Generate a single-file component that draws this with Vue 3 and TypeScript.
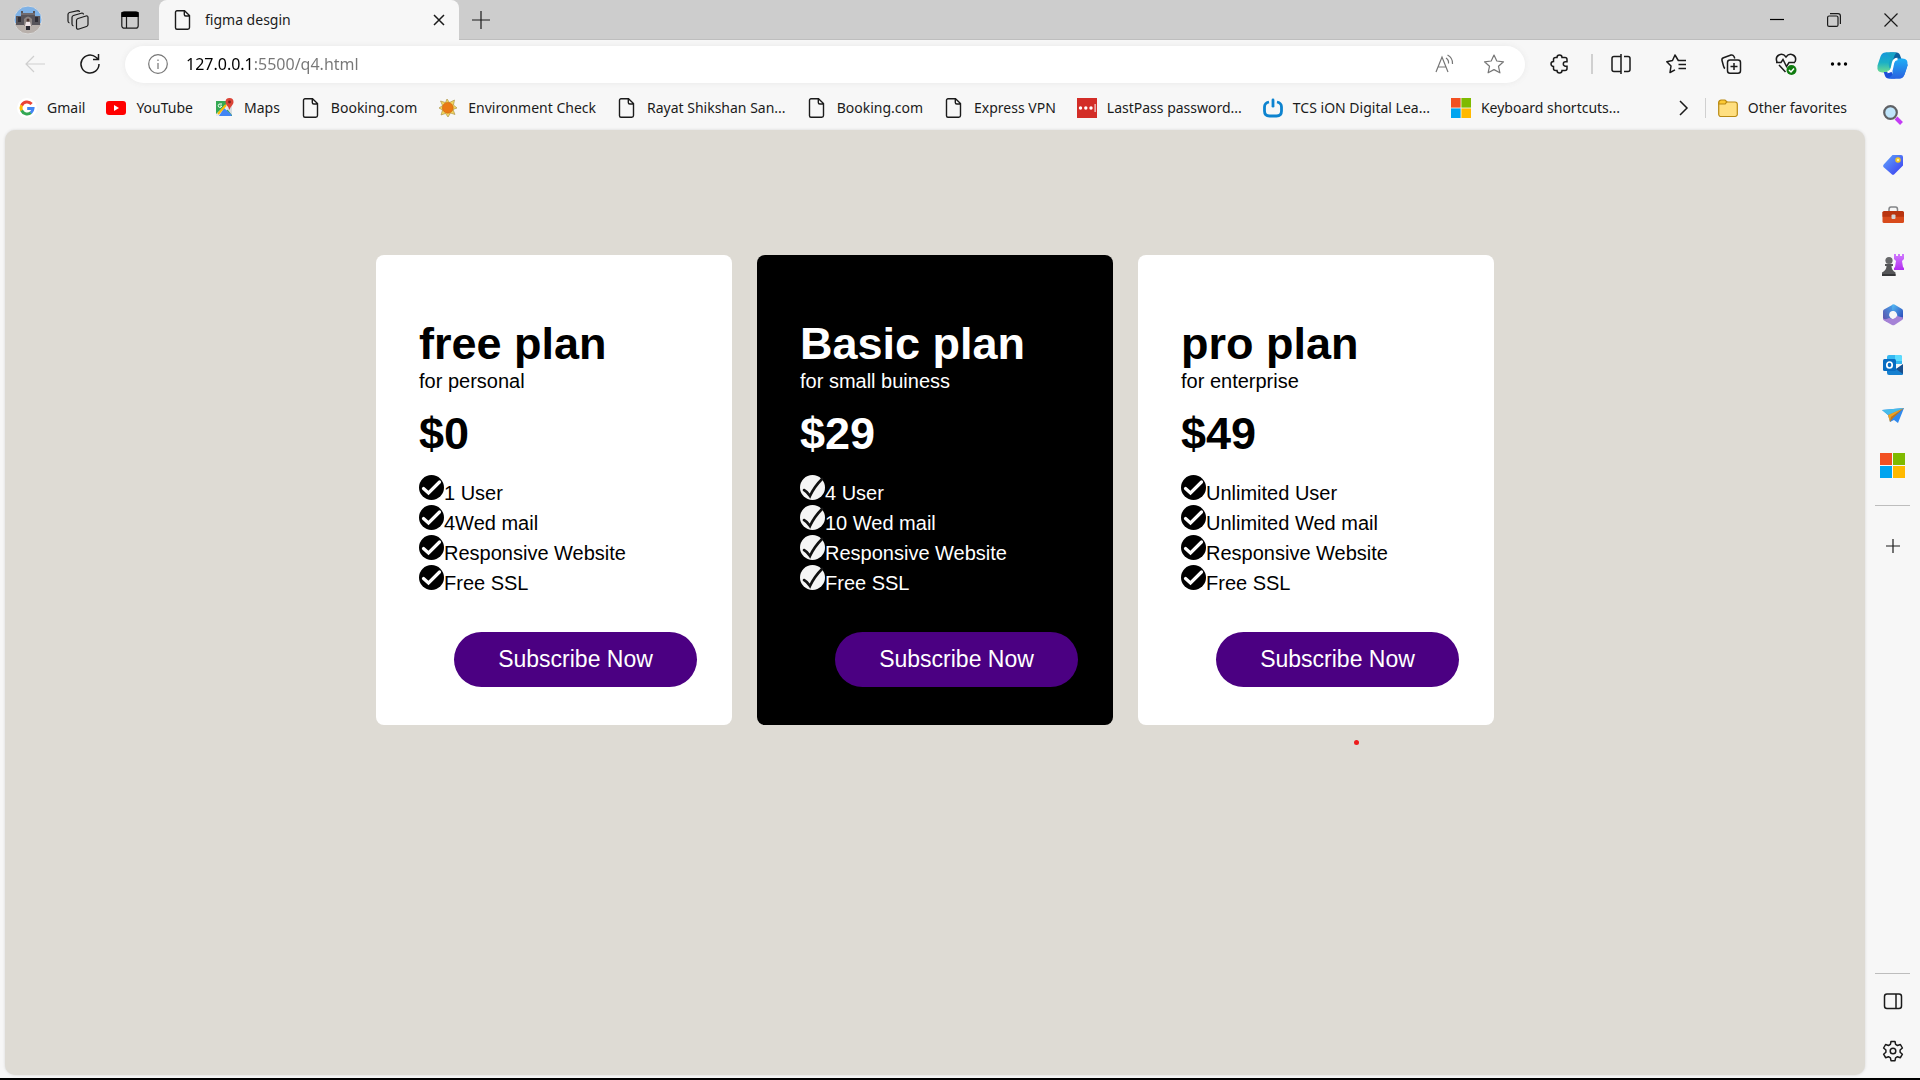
<script setup lang="ts">
import { ref } from 'vue'

interface Bookmark {
  label: string
  icon: string
}

interface Plan {
  name: string
  audience: string
  price: string
  features: string[]
  dark?: boolean
}

const address = ref('127.0.0.1:5500/q4.html')

// Inner markup of each 20x20 icon
const icons: Record<string, string> = {
  page: '<path d="M4 .8h7.500l5 4.700V17.500a1.700 1.700 0 0 1-1.700 1.700H4A1.500 1.500 0 0 1 2.500 17.700V2.300A1.500 1.500 0 0 1 4 .8z M11.300 1V4.500a1.500 1.500 0 0 0 1.500 1.500H16" fill="none" stroke="#1b1b1b" stroke-width="1.400"/>',
  google: '<circle cx="10" cy="10" r="10" fill="#fff"/><g fill="none" stroke-width="3"><path d="M14.600 6A6 6 0 0 0 4.600 7.600" stroke="#ea4335"/><path d="M4.600 7.400a6 6 0 0 0 0 5.200" stroke="#fbbc05"/><path d="M4.600 12.400a6 6 0 0 0 9.400 2.200" stroke="#34a853"/><path d="M13.800 14.800a6 6 0 0 0 2.200-4.300h-5.800" stroke="#4285f4"/></g>',
  youtube: '<rect y="3" width="20" height="14" rx="3" fill="#f00"/><path d="M8 7v6l5-3z" fill="#fff"/>',
  maps: '<path d="M2 3h16v15H2z" fill="#34a853"/><path d="M2 16 16 3h2v5L6 18H2z" fill="#e8eaed"/><path d="M10 10l8 7-1 1H5z" fill="#4285f4"/><path d="M13 11l5-4v10z" fill="#dadce0"/><path d="M12 7l-8 9" stroke="#fbbc05" stroke-width="2"/><path d="M8 6H6a1.700 1.700 0 1 0 1.600 2H6.300" fill="none" stroke="#fff"/><path d="M15.500 0a4 4 0 0 1 4 4c0 3-3 4-4 8-1-4-4-5-4-8a4 4 0 0 1 4-4z" fill="#db4437"/><circle cx="15.500" cy="4" r="1.400" fill="#7b231e"/>',
  sun: '<path d="M9 1l2.500 3.500L16.500 2l-1 5L19 10l-4 1.500 2 5-4.500-1.500L10 19l-2.500-3.500-4.500 1.500 1.500-5L1 10l3.500-2.500L2.500 3l5 1.500z" fill="#f0d560" stroke="#a58a3c" stroke-width=".6"/><circle cx="9.800" cy="9.800" r="5.400" fill="#ea7a15" stroke="#c9650f" stroke-width=".6"/>',
  lastpass: '<path d="M0 0h20v20H0z" fill="#d32d27"/><g fill="#fff"><circle cx="3.500" cy="10" r="1.700"/><circle cx="8.800" cy="10" r="1.700"/><circle cx="14" cy="10" r="1.700"/><path d="M17.600 6h1v8h-1z"/></g>',
  tcs: '<path d="M6 4Q1.500 5 1.500 9v4q0 5 5 5h7q5 0 5-5V9q0-4-4.500-5" fill="none" stroke="#0d83cf" stroke-width="2.800"/><path d="M10 2v6.200" stroke="#0d83cf" stroke-width="2.800" stroke-linecap="round"/>',
  microsoft: '<path d="M0 0h9.600v9.600H0z" fill="#f25022"/><path d="M10.400 0H20v9.600h-9.600z" fill="#7fba00"/><path d="M0 10.400h9.600V20H0z" fill="#00a4ef"/><path d="M10.400 10.400H20V20h-9.600z" fill="#ffb900"/>',
  folder: '<path d="M.7 5.500a3 3 0 0 1 3-3H7l2 1.500h8a2.300 2.300 0 0 1 2.300 2.300v9.500A2.300 2.300 0 0 1 17 18.500H3a2.300 2.300 0 0 1-2.300-2.300z" fill="#ffdf80" stroke="#b98a13" stroke-width="1.200"/><path d="M.7 5.200A3 3 0 0 1 3 2h4l1.800 1.800-1.600 2.200H.7z" fill="#fcc934" stroke="#b98a13" stroke-width="1.200"/>',
  search: '<path d="M13 13l5.500 5.500" stroke="#c33cf5" stroke-width="4"/><circle cx="7.500" cy="7.500" r="6.300" fill="#bfe5fb" stroke="#5f6165" stroke-width="2.200"/>',
  tag: '<defs><linearGradient id="tag" x1="0" y1="0" x2="1" y2="1"><stop stop-color="#61a8fb"/><stop offset="1" stop-color="#3a39f0"/></linearGradient></defs><path d="M9.500 0H18a2 2 0 0 1 2 2v8.500L11.500 19a2 2 0 0 1-3 0L.7 12.300a2 2 0 0 1 0-2.800z" fill="url(#tag)"/><circle cx="15" cy="5" r="2" fill="#fff2a0" stroke="#f4c720" stroke-width="1.500"/>',
  toolbox: '<path d="M6 6.500V4.500q0-2.400 2-2.400h4.500q2 0 2 2.400v2" fill="none" stroke="#838588" stroke-width="1.500"/><path d="M-.5 7H21v9.500q0 1.500-1.500 1.500H1q-1.500 0-1.500-1.500z" fill="#d84a1b"/><path d="M-.5 7.500Q-.5 6 1 6h18.500Q21 6 21 7.500v4.300H-.5z" fill="#b9340f"/><rect x="8.500" y="9.500" width="4" height="4.500" rx="1" fill="#d3d4d6"/>',
  games: '<defs><linearGradient id="rook" x1="0" y1="0" x2="0" y2="1"><stop stop-color="#d07bff"/><stop offset="1" stop-color="#b22df0"/></linearGradient></defs><path d="M11-1h2v2h2v-2h2v2h2v-2h2v5l-2 2 1 6 1 1v2H11v-2l1-1 1-6-2-2z" fill="url(#rook)"/><circle cx="6" cy="5.500" r="3.600" fill="#67686a"/><path d="M2 9h8v2H8.500q0 4 4 6.500V21H-1v-3.500Q3.500 15 3.500 11H2z" fill="#555658"/><path d="M-1 19h13.500v2H-1z" fill="#363739"/>',
  m365: '<defs><linearGradient id="ma" x1="0" y1="1" x2="1" y2="0"><stop stop-color="#604ba5"/><stop offset="1" stop-color="#3fa8f1"/></linearGradient><linearGradient id="mb" x1="0" y1="0" x2="1" y2="1"><stop stop-color="#57c0f7"/><stop offset="1" stop-color="#2840b4"/></linearGradient></defs><path d="M10-.5 1 4.500Q0 5 0 6.500v7L4 17l5-3-3-4 5-5z" fill="url(#ma)"/><path d="M9.500-.5q1-.5 2 0l7.500 4.500q1 .5 1 2v8l-5 1-1-6-5-4z" fill="url(#mb)"/><path d="M20 12.500q0 2-1 2.500l-7.500 5q-1 .5-2.500 0L1 15.500q-1-.5-1-2 3 1.500 6-.5l4 1 4-3z" fill="#a582d6"/><circle cx="10" cy="9.800" r="3.700" fill="#f7f7f7"/>',
  outlook: '<path d="M6 0h11q2 0 2 2v7H4V2q0-2 2-2z" fill="#35b8f1"/><path d="M12 0h5q2 0 2 2v4h-7z" fill="#5bdcff"/><path d="M4 7h8v8H4z" fill="#0a6bc2"/><path d="M20 10v9q0 1-1 1H6q-2 0-2-2v-3l9-1z" fill="#1680d0"/><path d="M13 14l7-5v10z" fill="#1a4f8d"/><rect y="4" width="13" height="12" rx="1.500" fill="#086cc1"/><ellipse cx="6.500" cy="10" rx="2.700" ry="3" fill="none" stroke="#fff" stroke-width="1.700"/>',
  drop: '<path d="M-1 5 21 3 15 18l-4-3-4 2-2-7z" fill="#2f89ee"/><path d="M-1 5 21 3 5 10z" fill="#48bce9"/><path d="M21 3 8 12l-1 5-2-7z" fill="#f2a21c"/><path d="M21 3 8 12l-1 5 3-4z" fill="#c87410"/>',
  copilot: '<defs><linearGradient id="ca" x1="0" y1="0" x2="0" y2="1"><stop stop-color="#1596dc"/><stop offset=".5" stop-color="#1bb0c6"/><stop offset="1" stop-color="#6fdc8f"/></linearGradient><linearGradient id="cb" x1="0" y1="0" x2="0" y2="1"><stop stop-color="#2b62e0"/><stop offset="1" stop-color="#1fb0f6"/></linearGradient></defs><g transform="translate(-2 -.4) scale(.8)"><path d="M12 0h7q3 0 4 4l1.500 4H16z" fill="#0b5f9f"/><path d="M8 0h9q-2 2-2 5v7l-2 5q-1 3-4 3H5Q-1 20 0 13L3 4Q4.500 0 8 0z" fill="url(#ca)"/><path d="M8 0h11q-2 2-3 6l-1 4q-1 4-3 6Q10 9 14 6z" fill="#17a2c6"/><path d="M18 26h-7q-3 0-4-4l-.8-2.500H14z" fill="#1d4fd8"/><path d="M8 0h11Q-1 20 0 13 1.500 8 3 4 4.500 0 8 0z" transform="rotate(180 15 13)" fill="#1d6ee8"/><path d="M8 0h9q-2 2-2 5v7l-2 5q-1 3-4 3H5Q-1 20 0 13L3 4Q4.500 0 8 0z" transform="rotate(180 15 13)" fill="url(#cb)"/><path d="M10 19.500q3.500 0 4.500-4l1-5q1-4 4.500-4" fill="none" stroke="#fff" stroke-width="2.400"/></g>',
}

const bookmarks: Bookmark[] = [
  { label: 'Gmail', icon: 'google' },
  { label: 'YouTube', icon: 'youtube' },
  { label: 'Maps', icon: 'maps' },
  { label: 'Booking.com', icon: 'page' },
  { label: 'Environment Check', icon: 'sun' },
  { label: 'Rayat Shikshan San...', icon: 'page' },
  { label: 'Booking.com', icon: 'page' },
  { label: 'Express VPN', icon: 'page' },
  { label: 'LastPass password...', icon: 'lastpass' },
  { label: 'TCS iON Digital Lea...', icon: 'tcs' },
  { label: 'Keyboard shortcuts...', icon: 'microsoft' },
]

const sideApps = [
  { name: 'Copilot', icon: 'copilot' },
  { name: 'Search', icon: 'search' },
  { name: 'Shopping', icon: 'tag' },
  { name: 'Tools', icon: 'toolbox' },
  { name: 'Games', icon: 'games' },
  { name: 'Microsoft 365', icon: 'm365' },
  { name: 'Outlook', icon: 'outlook' },
  { name: 'Drop', icon: 'drop' },
  { name: 'Microsoft', icon: 'microsoft' },
]

const plans: Plan[] = [
  {
    name: 'free plan',
    audience: 'for personal',
    price: '$0',
    features: ['1 User', '4Wed mail', 'Responsive Website', 'Free SSL'],
  },
  {
    name: 'Basic plan',
    audience: 'for small buiness',
    price: '$29',
    features: ['4 User', '10 Wed mail', 'Responsive Website', 'Free SSL'],
    dark: true,
  },
  {
    name: 'pro plan',
    audience: 'for enterprise',
    price: '$49',
    features: ['Unlimited User', 'Unlimited Wed mail', 'Responsive Website', 'Free SSL'],
  },
]
</script>

<template>
  <div class="browser">
    <header class="titlebar">
      <div class="profile">
        <button class="plain" aria-label="Profile">
          <svg width="30" height="30" viewBox="0 0 30 30">
            <defs><clipPath id="round"><circle cx="15" cy="15" r="14" /></clipPath></defs>
            <g clip-path="url(#round)">
              <path d="M0 0h30v18H0z" fill="#7fb2e6" />
              <path d="M0 19h30v11H0z" fill="#b8b0ab" />
              <path d="M3 11h5V6h2v2h10V6h2v5h5v9H3z" fill="#57545a" />
              <path d="M11 21v-7q4-5 8 0v7z" fill="#8d8583" />
              <path d="M5 12h3v5H5zm17 0h3v5h-3z" fill="#302e35" />
              <path d="M8 9h14" stroke="#8b8282" />
              <path d="M13 17h4l1 4h-6z" fill="#efe4e6" />
              <path d="M13 21h4v4h-4z" fill="#2b2a33" />
              <circle cx="15" cy="15" r="1.500" fill="#4c3430" />
            </g>
            <circle cx="15" cy="15" r="14" fill="none" stroke="#d9d9d9" />
          </svg>
        </button>
        <button class="plain" aria-label="Workspaces">
          <svg class="line" width="22" height="20" viewBox="0 0 22 20">
            <path d="M11 8.500l8-2.500q2-.5 2 1.500v7q0 1.500-1.500 2L12 19q-2.500.6-2.500-1.500v-7Q9.500 9 11 8.500z" />
            <path d="M6.500 16Q5 15.500 5 14V7.500Q5 6 6.500 5.500L15 3q1.500 0 1.500 1.500" />
            <path d="M2.500 13Q1 12.500 1 11V4.500Q1 3 2.500 2.500L11 .7q1.500 0 1.500 1.300" />
          </svg>
        </button>
        <button class="plain" aria-label="Tab actions">
          <svg class="line" width="18" height="18" viewBox="0 0 18 18">
            <rect x=".8" y=".8" width="16.400" height="16.400" rx="2.500" />
            <path d="M1 1.500h16v4H1z" fill="#000" stroke="#000" />
            <path d="M5.500 6v11" />
          </svg>
        </button>
      </div>
      <div class="tab">
        <svg width="20" height="20" viewBox="0 0 20 20" v-html="icons.page"></svg>
        <span class="tab-name">figma desgin</span>
        <button class="plain" aria-label="Close tab">
          <svg class="line bold" width="10" height="10" viewBox="0 0 10 10"><path d="M0 0l10 10M10 0L0 10" /></svg>
        </button>
      </div>
      <button class="plain new-tab" aria-label="New tab">
        <svg class="line" width="18" height="18" viewBox="0 0 18 18"><path d="M9 0v18M0 9h18" /></svg>
      </button>
      <div class="window-controls">
        <button class="plain" aria-label="Minimize">
          <svg class="line" width="14" height="14" viewBox="0 0 14 14"><path d="M0 6.500h14" stroke="#000" /></svg>
        </button>
        <button class="plain" aria-label="Restore">
          <svg class="line" width="14" height="14" viewBox="0 0 14 14">
            <rect x=".6" y="3" width="10.400" height="10.400" rx="1.500" />
            <path d="M3 .7h8q2.400 0 2.400 2.300v8" />
          </svg>
        </button>
        <button class="plain" aria-label="Close">
          <svg class="line" width="14" height="14" viewBox="0 0 14 14"><path d="M.5.5l13 13M13.500.5l-13 13" /></svg>
        </button>
      </div>
    </header>

    <div class="body">
      <div class="main">
        <div class="toolbar">
          <button class="plain nav" aria-label="Back" disabled>
            <svg class="line faded" width="20" height="18" viewBox="0 0 20 18"><path d="M9 1L1 9l8 8M1 9h19" /></svg>
          </button>
          <button class="plain nav" aria-label="Refresh">
            <svg class="line bold" width="20" height="20" viewBox="0 0 20 20">
              <path d="M19 10a9 9 0 1 1-3-6.700L18 5M18.500 0v5.500H13" />
            </svg>
          </button>
          <div class="address">
            <svg class="line muted" width="20" height="20" viewBox="0 0 20 20">
              <circle cx="10" cy="10" r="9.300" /><path d="M10 9v6M10 5.500v1.500" />
            </svg>
            <input v-model="address" type="text" aria-label="Address" spellcheck="false" />
            <button class="plain" aria-label="Read aloud">
              <svg class="line muted" width="20" height="20" viewBox="0 0 20 20">
                <path d="M1 18L7 3l6 15M3 13h8M11 4q3 2 2.500 5.500M12.500 1q5.500 3 5 9" />
              </svg>
            </button>
            <button class="plain" aria-label="Add to favorites">
              <svg class="line muted" width="22" height="20" viewBox="0 0 22 20">
                <path d="M11 1l2.800 6 6.700.8-5 4.500 1.400 6.500L11 15.600l-5.900 3.200 1.400-6.500-5-4.500L8.200 7z" stroke-linejoin="round" />
              </svg>
            </button>
          </div>
          <button class="plain tool" aria-label="Extensions">
            <svg class="line bold" width="20" height="20" viewBox="0 0 20 20">
              <path d="M7 3.500a2.500 2.500 0 0 1 5 0h3q2 0 2 2v2.300h-1.500a2.200 2.200 0 0 0 0 4.400H17v2.300q0 2-2 2h-3a2.500 2.500 0 0 1-5 0H5.500q-2 0-2-2v-2a2.500 2.500 0 0 1 0-5V5.500q0-2 2-2z" />
            </svg>
          </button>
          <span class="divider"></span>
          <button class="plain tool" aria-label="Split screen">
            <svg class="line bold" width="20" height="20" viewBox="0 0 20 20">
              <path d="M7 2.500H3q-2 0-2 2v11q0 2 2 2h4M13 2.500h4q2 0 2 2v11q0 2-2 2h-4M10 0v20M7 2.500h3M7 17.500h3" />
            </svg>
          </button>
          <button class="plain tool" aria-label="Favorites">
            <svg class="line bold" width="20" height="20" viewBox="0 0 20 20">
              <path d="M18 6.500h-5.700L9 1 6.500 6.500.8 7.800 5 12l-1 6.500 5-2.700M13 6.500h7M12.500 10.500H20M12.500 14.500H20" stroke-linejoin="round" />
            </svg>
          </button>
          <button class="plain tool" aria-label="Collections">
            <svg class="line bold" width="20" height="20" viewBox="0 0 20 20">
              <path d="M4 14.500Q3 14 2.500 12L1 6.500Q.5 4.500 2.500 3.800L10 1q2-.5 3 1.500l.8 2" />
              <rect x="6.500" y="6" width="13" height="13.300" rx="2.500" /><path d="M13 9v7M9.500 12.500h7" />
            </svg>
          </button>
          <button class="plain tool" aria-label="Browser essentials">
            <svg class="line bold" width="22" height="22" viewBox="0 0 22 22">
              <path d="M2 9Q0 4 4 2q4-2 7 2 3-4 7-2 4 2 2 7M1 9.500h5l2-3 3.500 7 2.500-4h6M4 12l6.500 7" />
              <circle cx="16.500" cy="17" r="5" fill="#107c10" stroke="none" />
              <path d="M14 17l2 2 3-3.500" stroke="#fff" />
            </svg>
          </button>
          <button class="plain tool" aria-label="Settings and more">
            <svg width="18" height="4" viewBox="0 0 18 4">
              <circle cx="2.500" cy="2" r="1.700" /><circle cx="9" cy="2" r="1.700" /><circle cx="15.500" cy="2" r="1.700" />
            </svg>
          </button>
        </div>

        <nav class="bookmarks">
          <a v-for="(mark, i) in bookmarks" :key="i" href="#" class="bookmark">
            <svg width="20" height="20" viewBox="0 0 20 20" v-html="icons[mark.icon]"></svg>
            <span>{{ mark.label }}</span>
          </a>
          <div class="overflow">
            <button class="plain" aria-label="More favorites">
              <svg class="line bold" width="9" height="16" viewBox="0 0 9 16"><path d="M1 1l7 7-7 7" /></svg>
            </button>
            <span class="divider"></span>
            <a href="#" class="bookmark">
              <svg width="20" height="20" viewBox="0 0 20 20" v-html="icons.folder"></svg>
              <span>Other favorites</span>
            </a>
          </div>
        </nav>

        <main class="page">
          <section class="plans">
            <article v-for="plan in plans" :key="plan.name" class="card" :class="{ dark: plan.dark }">
              <h1>{{ plan.name }}</h1>
              <p class="audience">{{ plan.audience }}</p>
              <p class="price">{{ plan.price }}</p>
              <ul>
                <li v-for="feature in plan.features" :key="feature">
                  <svg width="25" height="25" viewBox="0 0 25 25">
                    <template v-if="plan.dark">
                      <circle cx="12.500" cy="12.500" r="12.500" fill="#f5f5f5" />
                      <path d="M4 15q3 1.500 6 6Q14 12 22 4" fill="none" stroke="#111" stroke-width="2.600" stroke-linecap="round" />
                    </template>
                    <template v-else>
                      <circle cx="12.500" cy="12.500" r="12.500" fill="#000" />
                      <path d="M4.500 13.500l5 4.500L20.500 7" fill="none" stroke="#fff" stroke-width="3.200" stroke-linecap="round" />
                    </template>
                  </svg>
                  <span>{{ feature }}</span>
                </li>
              </ul>
              <button class="subscribe">Subscribe Now</button>
            </article>
            <span class="pointer-dot"></span>
          </section>
        </main>
      </div>

      <aside class="sidebar">
        <button v-for="app in sideApps" :key="app.name" class="plain" :class="app.icon" :aria-label="app.name">
          <svg viewBox="0 0 20 20" v-html="icons[app.icon]"></svg>
        </button>
        <hr />
        <button class="plain" aria-label="Customize">
          <svg class="line" viewBox="0 0 20 20"><path d="M10 3v14M3 10h14" /></svg>
        </button>
        <hr class="push" />
        <button class="plain" aria-label="Toggle sidebar">
          <svg class="line bold" viewBox="0 0 20 20"><rect x="1.500" y="3" width="17" height="14.500" rx="2.500" /><path d="M13 3v14.500" /></svg>
        </button>
        <button class="plain" aria-label="Settings">
          <svg class="line bold" viewBox="0 0 20 20">
            <path d="M8 .5h4l.6 2.900 1.900 1.100 2.900-1 2 3.500-2.300 2v2.200l2.300 2-2 3.500-2.900-1-1.900 1.100-.6 2.900H8l-.6-2.900-1.900-1.100-2.900 1-2-3.500 2.300-2V9L.6 7l2-3.500 2.900 1 1.900-1.100z" stroke-linejoin="round" />
            <circle cx="10" cy="10" r="2.800" />
          </svg>
        </button>
      </aside>
    </div>
  </div>
</template>

<style>
body {
  margin: 0;
}
</style>

<style scoped>
* {
  box-sizing: border-box;
}

.browser {
  display: flex;
  flex-direction: column;
  min-height: 100vh;
  border-bottom: 2px solid #000;
  background: #f7f7f7;
  color: #1b1b1b;
  font-family: "Noto Sans", "Open Sans", sans-serif;
  font-size: 14px;
}

svg {
  display: block;
  flex: none;
  overflow: visible;
}

.line {
  fill: none;
  stroke: #1b1b1b;
  stroke-width: 1.2;
}

.bold {
  stroke-width: 1.5;
}

.muted {
  stroke: #767676;
}

.faded {
  stroke: #cfcfcf;
}

.plain {
  display: flex;
  align-items: center;
  justify-content: center;
  padding: 0;
  border: 0;
  background: none;
}

.divider {
  width: 2px;
  height: 20px;
  background: #d0d0d0;
}

/* Title bar */
.titlebar {
  display: flex;
  align-items: center;
  height: 40px;
  background: #cdcdcd;
  box-shadow: inset 0 -1px #bdbdbd;
}

.profile {
  display: flex;
  align-items: center;
  gap: 24px;
  width: 159px;
  padding-left: 13px;
}

.profile button:last-child {
  margin-left: 8px;
}

.tab {
  display: flex;
  align-items: center;
  width: 300px;
  height: 40px;
  padding: 0 15px 0 14px;
  border-radius: 8px 8px 0 0;
  background: #f7f7f7;
}

.tab-name {
  flex: 1;
  padding-left: 12px;
  line-height: 20px;
}

.new-tab {
  margin-left: 13px;
}

.window-controls {
  display: flex;
  margin-left: auto;
  padding-right: 1px;
}

.window-controls button {
  width: 57px;
  height: 40px;
}

/* Layout below the title bar */
.body {
  display: flex;
  flex: 1;
}

.main {
  display: flex;
  flex: 1;
  flex-direction: column;
  min-width: 0;
}

/* Toolbar */
.toolbar {
  display: flex;
  align-items: center;
  height: 48px;
  padding-left: 7px;
}

.nav {
  width: 55px;
  height: 40px;
}

.address {
  display: flex;
  flex: 1;
  align-items: center;
  gap: 18px;
  height: 37px;
  margin: 0 7px 0 8px;
  padding: 0 20px 0 23px;
  border-radius: 19px;
  background: #fff;
  box-shadow: 0 0 6px #e9e9e9;
}

.address input {
  flex: 1;
  min-width: 0;
  padding: 0;
  border: 0;
  outline: 0;
  /* host in black, the rest of the address in grey */
  background: linear-gradient(90deg, #000 68px, #767676 68px);
  background-clip: text;
  -webkit-background-clip: text;
  color: transparent;
  font: 16px/24px "Noto Sans", "Open Sans", sans-serif;
}

.address button + button {
  margin-left: 10px;
}

.tool {
  width: 55px;
  height: 40px;
}

.tool:last-child {
  width: 52px;
}

.toolbar .divider {
  margin-left: 4px;
}

/* Favorites bar */
.bookmarks {
  display: flex;
  align-items: center;
  gap: 21px;
  height: 42px;
  padding: 0 18px 2px 17px;
}

.bookmark {
  display: flex;
  align-items: center;
  gap: 10px;
  color: inherit;
  line-height: 20px;
  text-decoration: none;
  white-space: nowrap;
}

.overflow {
  display: flex;
  align-items: center;
  gap: 12px;
  margin-left: auto;
}

.overflow .divider {
  width: 1px;
  margin-left: 5px;
}

/* Page */
.page {
  flex: 1;
  margin: 0 0 3px 5px;
  padding: 125px 20px;
  border-radius: 10px;
  background: #dedbd4;
  box-shadow: 0 0 3px #d5d5d5;
  font-family: "Liberation Sans", Arial, sans-serif;
}

.plans {
  position: relative;
  display: flex;
  justify-content: center;
  gap: 25px;
  width: fit-content;
  margin: 0 auto;
}

.card {
  display: flex;
  flex-direction: column;
  width: 356px;
  padding: 63px 35px 38px 43px;
  border-radius: 8px;
  background: #fff;
  color: #000;
  font-size: 20px;
  line-height: 24px;
}

.card.dark {
  background: #000;
  color: #fff;
}

.card h1,
.price {
  margin: 0;
  font-size: 45px;
  font-weight: 700;
  line-height: 51px;
}

.audience {
  margin: 0 0 15px;
}

.card ul {
  margin: 16px 0 37px;
  padding: 0;
  list-style: none;
}

.card li {
  display: flex;
  align-items: baseline;
  height: 30px;
}

.subscribe {
  align-self: flex-end;
  width: 243px;
  height: 55px;
  padding: 0 0 2px;
  border: 0;
  border-radius: 28px;
  background: #4b0082;
  color: #fff;
  font: 23px/28px "Liberation Sans", Arial, sans-serif;
}

.pointer-dot {
  position: absolute;
  right: 135px;
  bottom: -20px;
  width: 5px;
  height: 5px;
  border-radius: 50%;
  background: #ed1c1c;
}

/* Sidebar */
.sidebar {
  display: flex;
  flex-direction: column;
  align-items: center;
  width: 55px;
  padding-bottom: 2px;
}

.sidebar button {
  width: 50px;
  height: 50px;
}

.sidebar svg {
  width: 20px;
  height: 20px;
}

.sidebar .microsoft svg,
.sidebar .copilot svg {
  width: 25px;
  height: 25px;
}

.sidebar hr {
  width: 35px;
  height: 1px;
  margin: 15px 0;
  border: 0;
  background: #bdbdbd;
}

.sidebar hr.push {
  margin: auto 0 2px;
}
</style>
